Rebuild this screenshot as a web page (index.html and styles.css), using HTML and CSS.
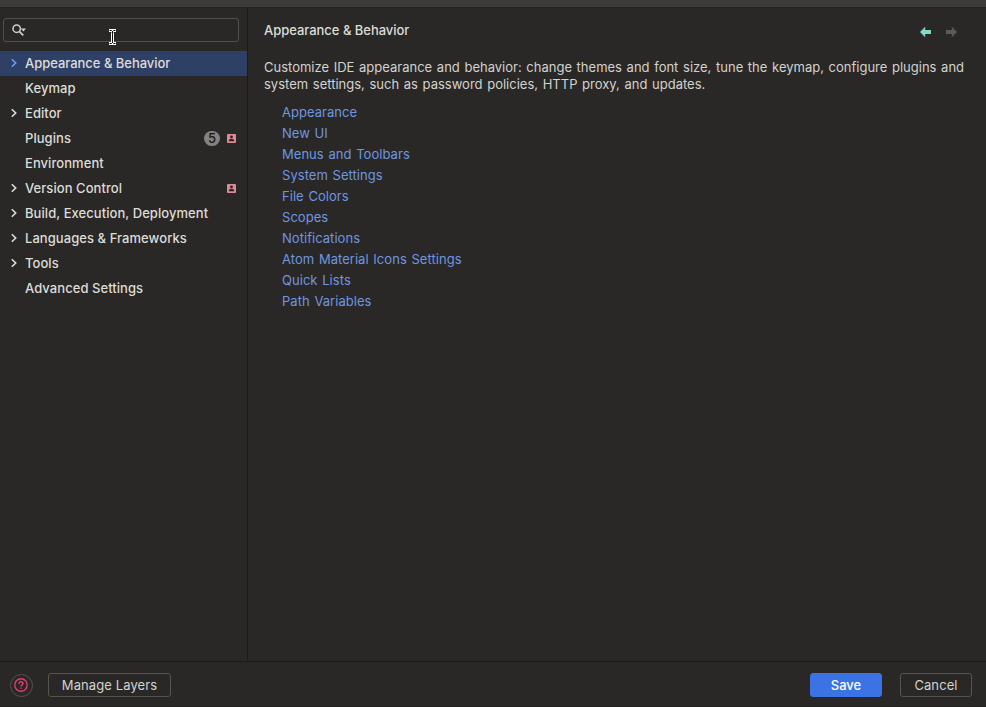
FILE: index.html
```html
<!DOCTYPE html>
<html lang="en">
<head>
<meta charset="utf-8">
<title>Settings</title>
<link rel="stylesheet" href="styles.css">
</head>
<body>
<svg class="defs" width="0" height="0">
  <symbol id="chevron" viewBox="0 0 8 10"><path d="M1.8 1.2 5.7 5 1.8 8.8" fill="none" stroke="currentColor" stroke-width="1.6"/></symbol>
  <symbol id="badge" viewBox="0 0 9 9"><rect width="9" height="9" rx="1" fill="#dc8a94"/><circle cx="4.5" cy="3" r="1.4" fill="#2b2226"/><path d="M1.8 7.2V6.4Q1.8 5 4.5 5T7.2 6.4V7.2Z" fill="#2b2226"/></symbol>
</svg>
<div class="window">
  <div class="titlebar"></div>
  <div class="main">
    <aside class="sidebar">
      <div class="search">
        <svg width="16" height="14" viewBox="0 0 16 14"><circle cx="4.700" cy="4.700" r="3.7" fill="none" stroke="#d0cfcc" stroke-width="1.5"/><path d="M7.3 7.3 11.3 11.3" stroke="#d0cfcc" stroke-width="1.7"/><path d="M8.8 4.600h5.2l-2.600 2.900z" fill="#d0cfcc"/></svg>
      </div>
      <nav class="tree">
        <div class="row selected"><svg class="chev"><use href="#chevron"/></svg><span>Appearance &amp; Behavior</span></div>
        <div class="row"><i class="chev"></i><span>Keymap</span></div>
        <div class="row"><svg class="chev"><use href="#chevron"/></svg><span>Editor</span></div>
        <div class="row"><i class="chev"></i><span>Plugins</span><b class="count">5</b><svg class="badge"><use href="#badge"/></svg></div>
        <div class="row"><i class="chev"></i><span>Environment</span></div>
        <div class="row"><svg class="chev"><use href="#chevron"/></svg><span>Version Control</span><svg class="badge alone"><use href="#badge"/></svg></div>
        <div class="row"><svg class="chev"><use href="#chevron"/></svg><span>Build, Execution, Deployment</span></div>
        <div class="row"><svg class="chev"><use href="#chevron"/></svg><span>Languages &amp; Frameworks</span></div>
        <div class="row"><svg class="chev"><use href="#chevron"/></svg><span>Tools</span></div>
        <div class="row"><i class="chev"></i><span>Advanced Settings</span></div>
      </nav>
    </aside>
    <section class="content">
      <header class="head">
        <h1>Appearance &amp; Behavior</h1>
        <svg class="arrows" width="38" height="12" viewBox="0 0 38 12"><path d="M0 6 5.2.8V4H11v4H5.2v3.200z" fill="#86d6c8"/><path d="M37 6 31.800.8V4H26v4h5.800v3.200z" fill="#5b5a58"/></svg>
      </header>
      <p>Customize IDE appearance and behavior: change themes and font size, tune the keymap, configure plugins and<br>system settings, such as password policies, HTTP proxy, and updates.</p>
      <ul>
        <li>Appearance</li><li>New UI</li><li>Menus and Toolbars</li><li>System Settings</li><li>File Colors</li><li>Scopes</li><li>Notifications</li><li>Atom Material Icons Settings</li><li>Quick Lists</li><li>Path Variables</li>
      </ul>
    </section>
  </div>
  <footer class="footer">
    <div class="help"><svg width="14" height="14" viewBox="0 0 14 14" fill="none" stroke="#df3d70" stroke-width="1.400"><circle cx="7" cy="7" r="6.200"/><path d="M5 5.700Q5 3.800 7 3.800T9 5.600C9 6.900 7 6.900 7 8.500M7 9.400V10.700"/></svg></div>
    <button class="manage">Manage Layers</button>
    <button class="save">Save</button>
    <button class="cancel">Cancel</button>
  </footer>
</div>
<svg class="cursor" width="9" height="18" viewBox="0 0 9 18"><path d="M1 2.500H3.500L4.500 3.500 5.500 2.500H8M4.500 3V15M1 15.500H3.500L4.500 14.500 5.500 15.500H8" fill="none" stroke="#fff" stroke-width="3"/><path d="M1.500 2.500H3.500L4.500 3.500 5.500 2.500H7.500M4.500 3V15M1.500 15.500H3.500L4.500 14.500 5.500 15.500H7.500" fill="none" stroke="#111" stroke-width="1"/></svg>
</body>
</html>
```
FILE: styles.css
```css
* { box-sizing: border-box; }
body { margin: 0; background: #292826; color: #d3d2cf; font: 13px "Inter", sans-serif; overflow: hidden; }
.defs { position: absolute; }
.window { height: 707px; display: flex; flex-direction: column; border-bottom: 1px solid #1e1d1c; }
.titlebar { height: 8px; flex: none; background: #3c3b39; border-bottom: 1px solid #242322; }
.main { flex: 1; display: flex; min-height: 0; }
.sidebar { width: 248px; flex: none; border-right: 1px solid #1c1b1a; }
.search { height: 24px; margin: 10px 8px 9px 3px; border: 1px solid #51504d; border-radius: 3px; padding: 5px 0 0 8px; }
.search svg { display: block; }
.row { height: 25px; display: flex; align-items: center; padding: 0 11px 0 10px; font-weight: 500; letter-spacing: 0.06px; color: #dddcd9; }
.row span { padding-bottom: 2px; }
.selected { background: #2f4067; letter-spacing: -0.03px; }
.selected .chev { color: #6c9bf5; }
.chev { width: 8px; height: 10px; margin: 0 7px 1px 0; flex: none; }
.count { width: 16px; height: 15px; margin-left: auto; border-radius: 7.5px; background: #85837f; color: #171716; font-size: 13px; line-height: 15px; font-weight: 500; text-align: center; letter-spacing: 0; }
.badge { width: 9px; height: 9px; margin-left: 7px; }
.alone { margin-left: auto; }
.content { flex: 1; min-width: 0; padding: 13px 16px; }
.head { display: flex; justify-content: space-between; align-items: center; height: 18px; }
h1 { margin: 0; font-size: 13px; font-weight: 500; letter-spacing: -0.03px; color: #dddcd9; }
.arrows { margin: 3px 12px 0 0; }
p { margin: 20px 0 0; line-height: 17px; letter-spacing: 0; word-spacing: 1px; white-space: nowrap; }
ul { list-style: none; margin: 9px 0 0 18px; padding: 0; }
li { height: 21px; line-height: 21px; letter-spacing: 0.04px; word-spacing: 1px; color: #6f96e0; }
.footer { height: 45px; flex: none; display: flex; align-items: center; padding: 2px 14px 0 10px; border-top: 1px solid #1c1b1a; }
.help { width: 23px; height: 23px; border: 1px solid #555451; border-radius: 50%; display: flex; align-items: center; padding-left: 3px; margin-right: 15px; }
button { height: 24px; padding: 0; border: 1px solid #555451; border-radius: 3px; background: transparent; color: #d3d2cf; font: 13px "Inter", sans-serif; letter-spacing: 0.1px; }
.manage { width: 123px; }
.save { width: 72px; margin-left: auto; background: #3b72e4; border-color: #3b72e4; color: #fff; font-weight: 500; letter-spacing: 0; }
.cancel { width: 72px; margin-left: 18px; }
.cursor { position: absolute; left: 108px; top: 28px; }
```
